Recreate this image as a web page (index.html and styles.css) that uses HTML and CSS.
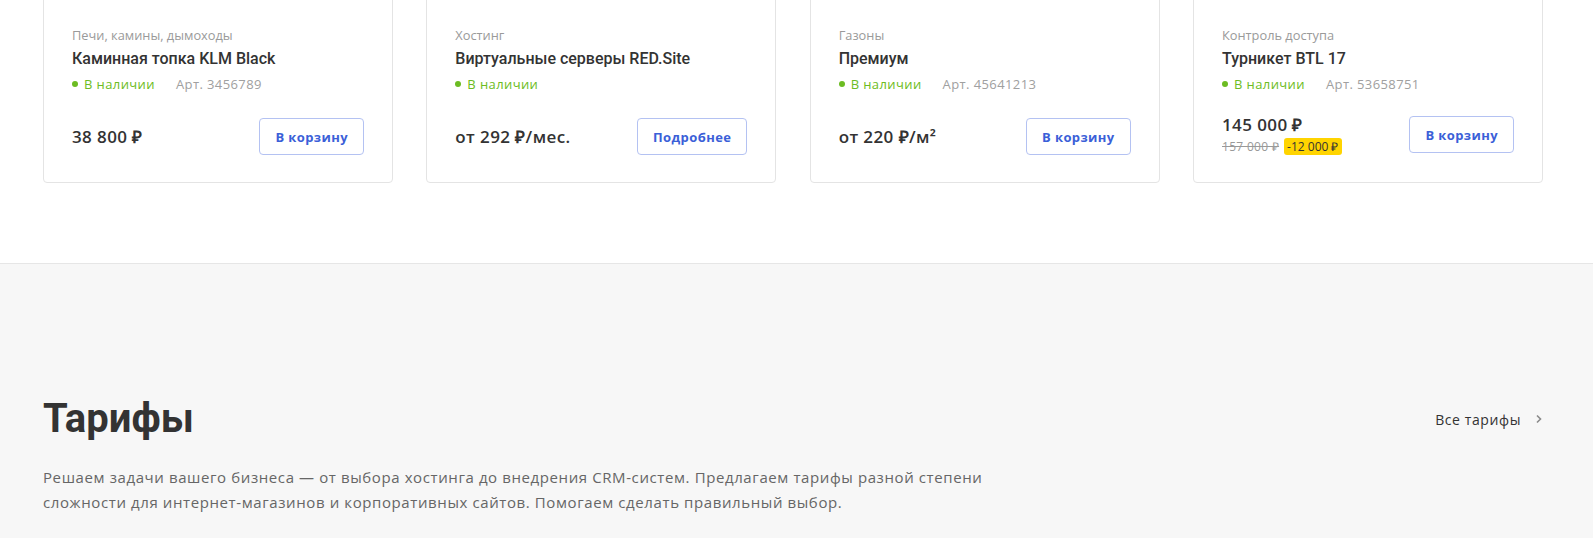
FILE: index.html
```html
<!DOCTYPE html>
<html>

<head>
    <title>Каталог и тарифы</title>
    <link rel="stylesheet" href="styles.css">
</head>

<body>
    <section class="catalog">
        <div class="cards">
            <div class="card">
                <div class="card-section">Печи, камины, дымоходы</div>
                <div class="card-title">Каминная топка KLM Black</div>
                <div class="card-meta">
                    <span class="stock">В наличии</span>
                    <span class="article">Арт. 3456789</span>
                </div>
                <div class="card-foot">
                    <div class="price">38 800 ₽</div>
                    <button class="btn">В корзину</button>
                </div>
            </div>

            <div class="card">
                <div class="card-section">Хостинг</div>
                <div class="card-title">Виртуальные серверы RED.Site</div>
                <div class="card-meta">
                    <span class="stock">В наличии</span>
                </div>
                <div class="card-foot">
                    <div class="price">от 292 ₽/мес.</div>
                    <button class="btn">Подробнее</button>
                </div>
            </div>

            <div class="card">
                <div class="card-section">Газоны</div>
                <div class="card-title">Премиум</div>
                <div class="card-meta">
                    <span class="stock">В наличии</span>
                    <span class="article">Арт. 45641213</span>
                </div>
                <div class="card-foot">
                    <div class="price">от 220 ₽/м²</div>
                    <button class="btn">В корзину</button>
                </div>
            </div>

            <div class="card">
                <div class="card-section">Контроль доступа</div>
                <div class="card-title">Турникет BTL 17</div>
                <div class="card-meta">
                    <span class="stock">В наличии</span>
                    <span class="article">Арт. 53658751</span>
                </div>
                <div class="card-foot">
                    <div class="price-box">
                        <div class="price">145 000 ₽</div>
                        <div class="price-old">
                            <s>157 000 ₽</s>
                            <span class="discount">-12 000 ₽</span>
                        </div>
                    </div>
                    <button class="btn">В корзину</button>
                </div>
            </div>
        </div>
    </section>

    <section class="tariffs">
        <div class="tariffs-head">
            <h2>Тарифы</h2>
            <a class="all-link" href="#">Все тарифы
                <svg width="8" height="10" viewBox="0 0 8 10"><path d="M2 1.5 5.5 5 2 8.5" fill="none" stroke="#8a8a8a" stroke-width="1.6"/></svg>
            </a>
        </div>
        <p class="tariffs-text">Решаем задачи вашего бизнеса — от выбора хостинга до внедрения CRM-систем. Предлагаем тарифы разной степени сложности для интернет-магазинов и корпоративных сайтов. Помогаем сделать правильный выбор.</p>
    </section>
</body>

</html>
```

FILE: styles.css
```css
body {
    margin: 0;
    font-family: "Open Sans", Arial, sans-serif;
    color: #333;
    background: #fff;
}

/* cards grid, page is scrolled a little so card tops are hidden */
.catalog {
    padding: 0 50px 80px 43px;
    margin-top: -20px;
}

.cards {
    display: grid;
    grid-template-columns: repeat(4, 1fr);
    gap: 33.33px;
    width: 1500px;
}

.card {
    display: flex;
    flex-direction: column;
    border: 1px solid #e4e4e4;
    border-radius: 4px;
    padding: 46px 28px 27px 28px;
}

.card-section {
    font-size: 12.8px;
    color: #9a9a9a;
    line-height: 16px;
}

.card-title {
    font-family: Roboto, Arial, sans-serif;
    font-weight: 500;
    font-size: 16px;
    line-height: 20px;
    margin-top: 6px;
}

.card-meta {
    display: flex;
    gap: 21px;
    font-size: 13px;
    letter-spacing: 0.4px;
    line-height: 16px;
    margin-top: 7px;
}

.stock {
    color: #6cbc22;
    display: flex;
    align-items: center;
}

.stock:before {
    content: "";
    width: 6px;
    height: 6px;
    border-radius: 50%;
    background: #6cbc22;
    margin-right: 6px;
}

.article {
    color: #a0a0a0;
}

.card-foot {
    display: flex;
    justify-content: space-between;
    align-items: center;
    margin-top: auto;
    padding-top: 22px;
}

.price {
    font-size: 17px;
    font-weight: 600;
    letter-spacing: 0.4px;
    color: #333;
}

.price-box .price {
    line-height: 22px;
}

.price-old {
    display: flex;
    align-items: center;
    gap: 5px;
    font-size: 12px;
    letter-spacing: 0.3px;
    margin-top: 2px;
}

.price-old s {
    color: #999;
}

.discount {
    background: #ffd400;
    color: #333;
    border-radius: 3px;
    padding: 0 3px;
    line-height: 17px;
    letter-spacing: 0;
}

.btn {
    font-family: "Open Sans", Arial, sans-serif;
    font-size: 13px;
    font-weight: 700;
    letter-spacing: 0.4px;
    color: #3b5fd8;
    background: #fff;
    border: 1px solid #b4c2f2;
    border-radius: 4px;
    height: 37px;
    padding: 0 15px;
}

/* tariffs block */
.tariffs {
    background: #f7f7f7;
    border-top: 1px solid #e6e6e6;
    padding: 131px 50px 40px 43px;
}

.tariffs-head {
    display: flex;
    justify-content: space-between;
    align-items: center;
    width: 1500px;
}

.tariffs-head h2 {
    font-family: Roboto, Arial, sans-serif;
    font-weight: 700;
    font-size: 40px;
    line-height: 48px;
    margin: 0;
    color: #333;
}

.all-link {
    font-size: 14px;
    letter-spacing: 0.6px;
    color: #333;
    text-decoration: none;
    display: flex;
    align-items: center;
    gap: 14px;
}

.tariffs-text {
    margin: 22px 0 0 0;
    max-width: 960px;
    font-size: 15px;
    letter-spacing: 0.6px;
    line-height: 25px;
    color: #666;
}
```
